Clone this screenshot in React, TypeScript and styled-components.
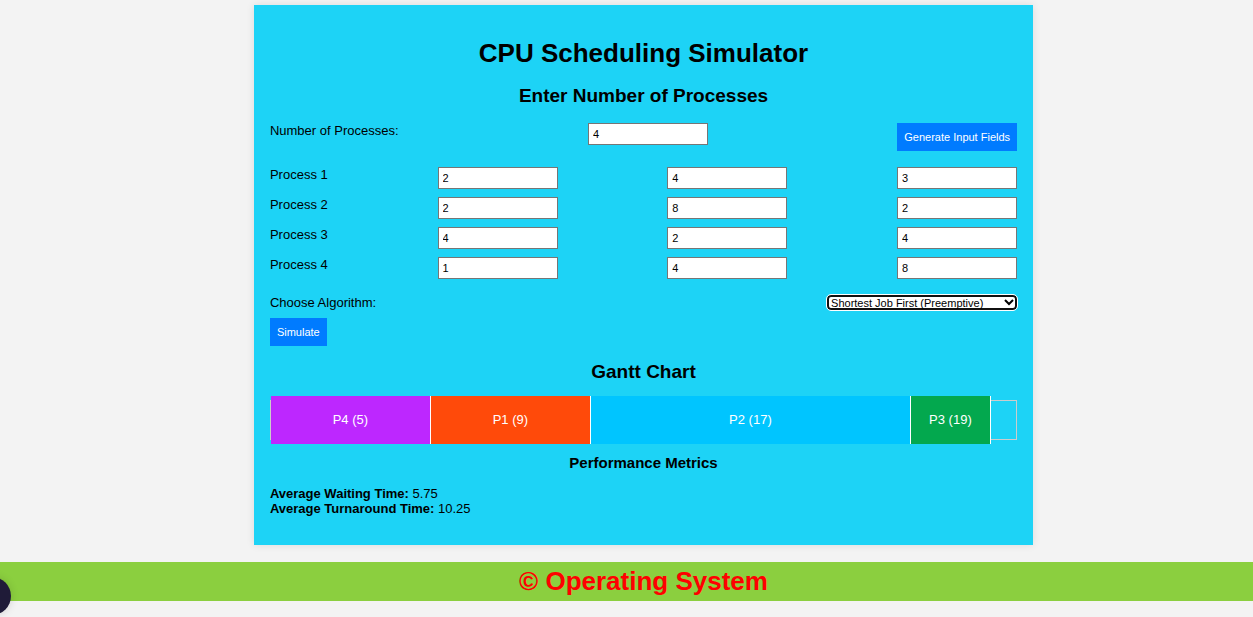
import React, { useState } from "react";
import styled, { createGlobalStyle } from "styled-components";

const GlobalStyle = createGlobalStyle`
  * {
    box-sizing: border-box;
  }
  body {
    margin: 0;
    background: #f3f3f3;
    color: #000;
    font: 13px/15px "Liberation Sans", Arial, sans-serif;
  }
`;

const Page = styled.div`
  display: flex;
  flex-direction: column;
  gap: 17px;
  padding: 5px 0 16px;
  overflow-x: hidden;
`;

const Main = styled.main`
  padding-left: 34px;
`;

const Panel = styled.div`
  width: calc(64% - 1px);
  max-width: 960px;
  margin: 0 auto;
  padding: 32px 16px 29px;
  background: #1dd3f6;
  box-shadow: 0 0 8px rgba(0, 0, 0, 0.1);
`;

const Title = styled.h1`
  margin: 0 0 16px;
  font-size: 26px;
  line-height: 32px;
  text-align: center;
`;

const Heading = styled.h2`
  margin: 0;
  font-size: 19px;
  line-height: 22px;
  text-align: center;
`;

const SubHeading = styled.h3`
  margin: 0 0 14px;
  font-size: 15px;
  line-height: 18px;
  text-align: center;
`;

const Row = styled.div`
  display: flex;
  justify-content: space-between;
  align-items: flex-start;
`;

const CountForm = styled.form`
  display: flex;
  justify-content: space-between;
  align-items: flex-start;
  margin: 16px 0;
`;

const ProcessList = styled.div`
  display: flex;
  flex-direction: column;
  gap: 8px;
  margin-bottom: 16px;
`;

const NumberInput = styled.input`
  width: 120px;
  height: 22px;
  padding: 0 4px;
  border: 1px solid #767676;
  border-radius: 0;
  background: #fff;
  color: #000;
  font: 11px "Liberation Sans", Arial, sans-serif;
  appearance: textfield;

  &::-webkit-inner-spin-button {
    display: none;
  }
`;

const Button = styled.button`
  height: 28px;
  padding: 0 7px;
  border: 0;
  background: #007bff;
  color: #fff;
  font: 11px "Liberation Sans", Arial, sans-serif;
  cursor: pointer;
`;

const AlgorithmSelect = styled.select`
  width: 190px;
  height: 15px;
  padding: 0 2px 0 0;
  border: 0;
  border-radius: 4px;
  outline: 1px solid #fff;
  background: #fff;
  box-shadow: inset 0 0 0 2px #101010;
  color: #000;
  font: 11px "Liberation Sans", Arial, sans-serif;
`;

const SimulateBar = styled.div`
  display: flex;
  margin: 8px 0 15px;
`;

const Gantt = styled.div`
  display: flex;
  align-items: center;
  height: 40px;
  margin: 17px 0 14px;
  border: 1px solid #ccc;
`;

const Segment = styled.div<{ $color: string }>`
  flex: none;
  height: 48px;
  border-right: 1px solid #fff;
  background: ${(p) => p.$color};
  color: #fff;
  line-height: 48px;
  text-align: center;
`;

const Metrics = styled.p`
  margin: 0;
`;

const Footer = styled.footer`
  padding: 4px 0 5px 34px;
  background: #8bcf3f;
  color: #f00;
  font-size: 26px;
  font-weight: bold;
  line-height: 30px;
  text-align: center;
`;

const FloatingButton = styled.button`
  position: fixed;
  left: -27px;
  bottom: 2px;
  width: 38px;
  height: 38px;
  padding: 0;
  border: 0;
  border-radius: 50%;
  background: #1f1b38;
  box-shadow: 0 0 8px rgba(0, 0, 0, 0.15);
`;

const UNIT = 40;

const fields = ["arrival time", "burst time", "priority"];

const initial = [
  [2, 4, 3],
  [2, 8, 2],
  [4, 2, 4],
  [1, 4, 8],
];

const segments = [
  { name: "P4", start: 1, end: 5, color: "#bd27ff" },
  { name: "P1", start: 5, end: 9, color: "#ff4a0a" },
  { name: "P2", start: 9, end: 17, color: "#00c5ff" },
  { name: "P3", start: 17, end: 19, color: "#03a84e" },
];

const algorithms = [
  "First Come First Serve",
  "Shortest Job First (Non-Preemptive)",
  "Shortest Job First (Preemptive)",
  "Priority Scheduling",
  "Round Robin",
];

export default function App() {
  const [algorithm, setAlgorithm] = useState(algorithms[2]);

  return (
    <>
      <GlobalStyle />
      <Page>
        <Main>
          <Panel>
            <Title>CPU Scheduling Simulator</Title>
            <Heading>Enter Number of Processes</Heading>
            <CountForm onSubmit={(e) => e.preventDefault()}>
              <label htmlFor="count">Number of Processes:</label>
              <NumberInput id="count" type="number" defaultValue={4} />
              <Button type="submit">Generate Input Fields</Button>
            </CountForm>
            <ProcessList>
              {initial.map((values, i) => (
                <Row key={i}>
                  <label htmlFor={`p${i}-0`}>Process {i + 1}</label>
                  {values.map((value, j) => (
                    <NumberInput
                      key={j}
                      id={`p${i}-${j}`}
                      type="number"
                      aria-label={`Process ${i + 1} ${fields[j]}`}
                      defaultValue={value}
                    />
                  ))}
                </Row>
              ))}
            </ProcessList>
            <Row>
              <label htmlFor="algorithm">Choose Algorithm:</label>
              <AlgorithmSelect
                id="algorithm"
                value={algorithm}
                onChange={(e) => setAlgorithm(e.target.value)}
              >
                {algorithms.map((name) => (
                  <option key={name}>{name}</option>
                ))}
              </AlgorithmSelect>
            </Row>
            <SimulateBar>
              <Button type="button">Simulate</Button>
            </SimulateBar>
            <Heading>Gantt Chart</Heading>
            <Gantt>
              {segments.map((s) => (
                <Segment
                  key={s.name}
                  $color={s.color}
                  style={{ width: (s.end - s.start) * UNIT }}
                >
                  {s.name} ({s.end})
                </Segment>
              ))}
            </Gantt>
            <SubHeading>Performance Metrics</SubHeading>
            <Metrics>
              <strong>Average Waiting Time:</strong> 5.75
              <br />
              <strong>Average Turnaround Time:</strong> 10.25
            </Metrics>
          </Panel>
        </Main>
        <Footer>© Operating System</Footer>
      </Page>
      <FloatingButton type="button" aria-label="Open assistant" />
    </>
  );
}
